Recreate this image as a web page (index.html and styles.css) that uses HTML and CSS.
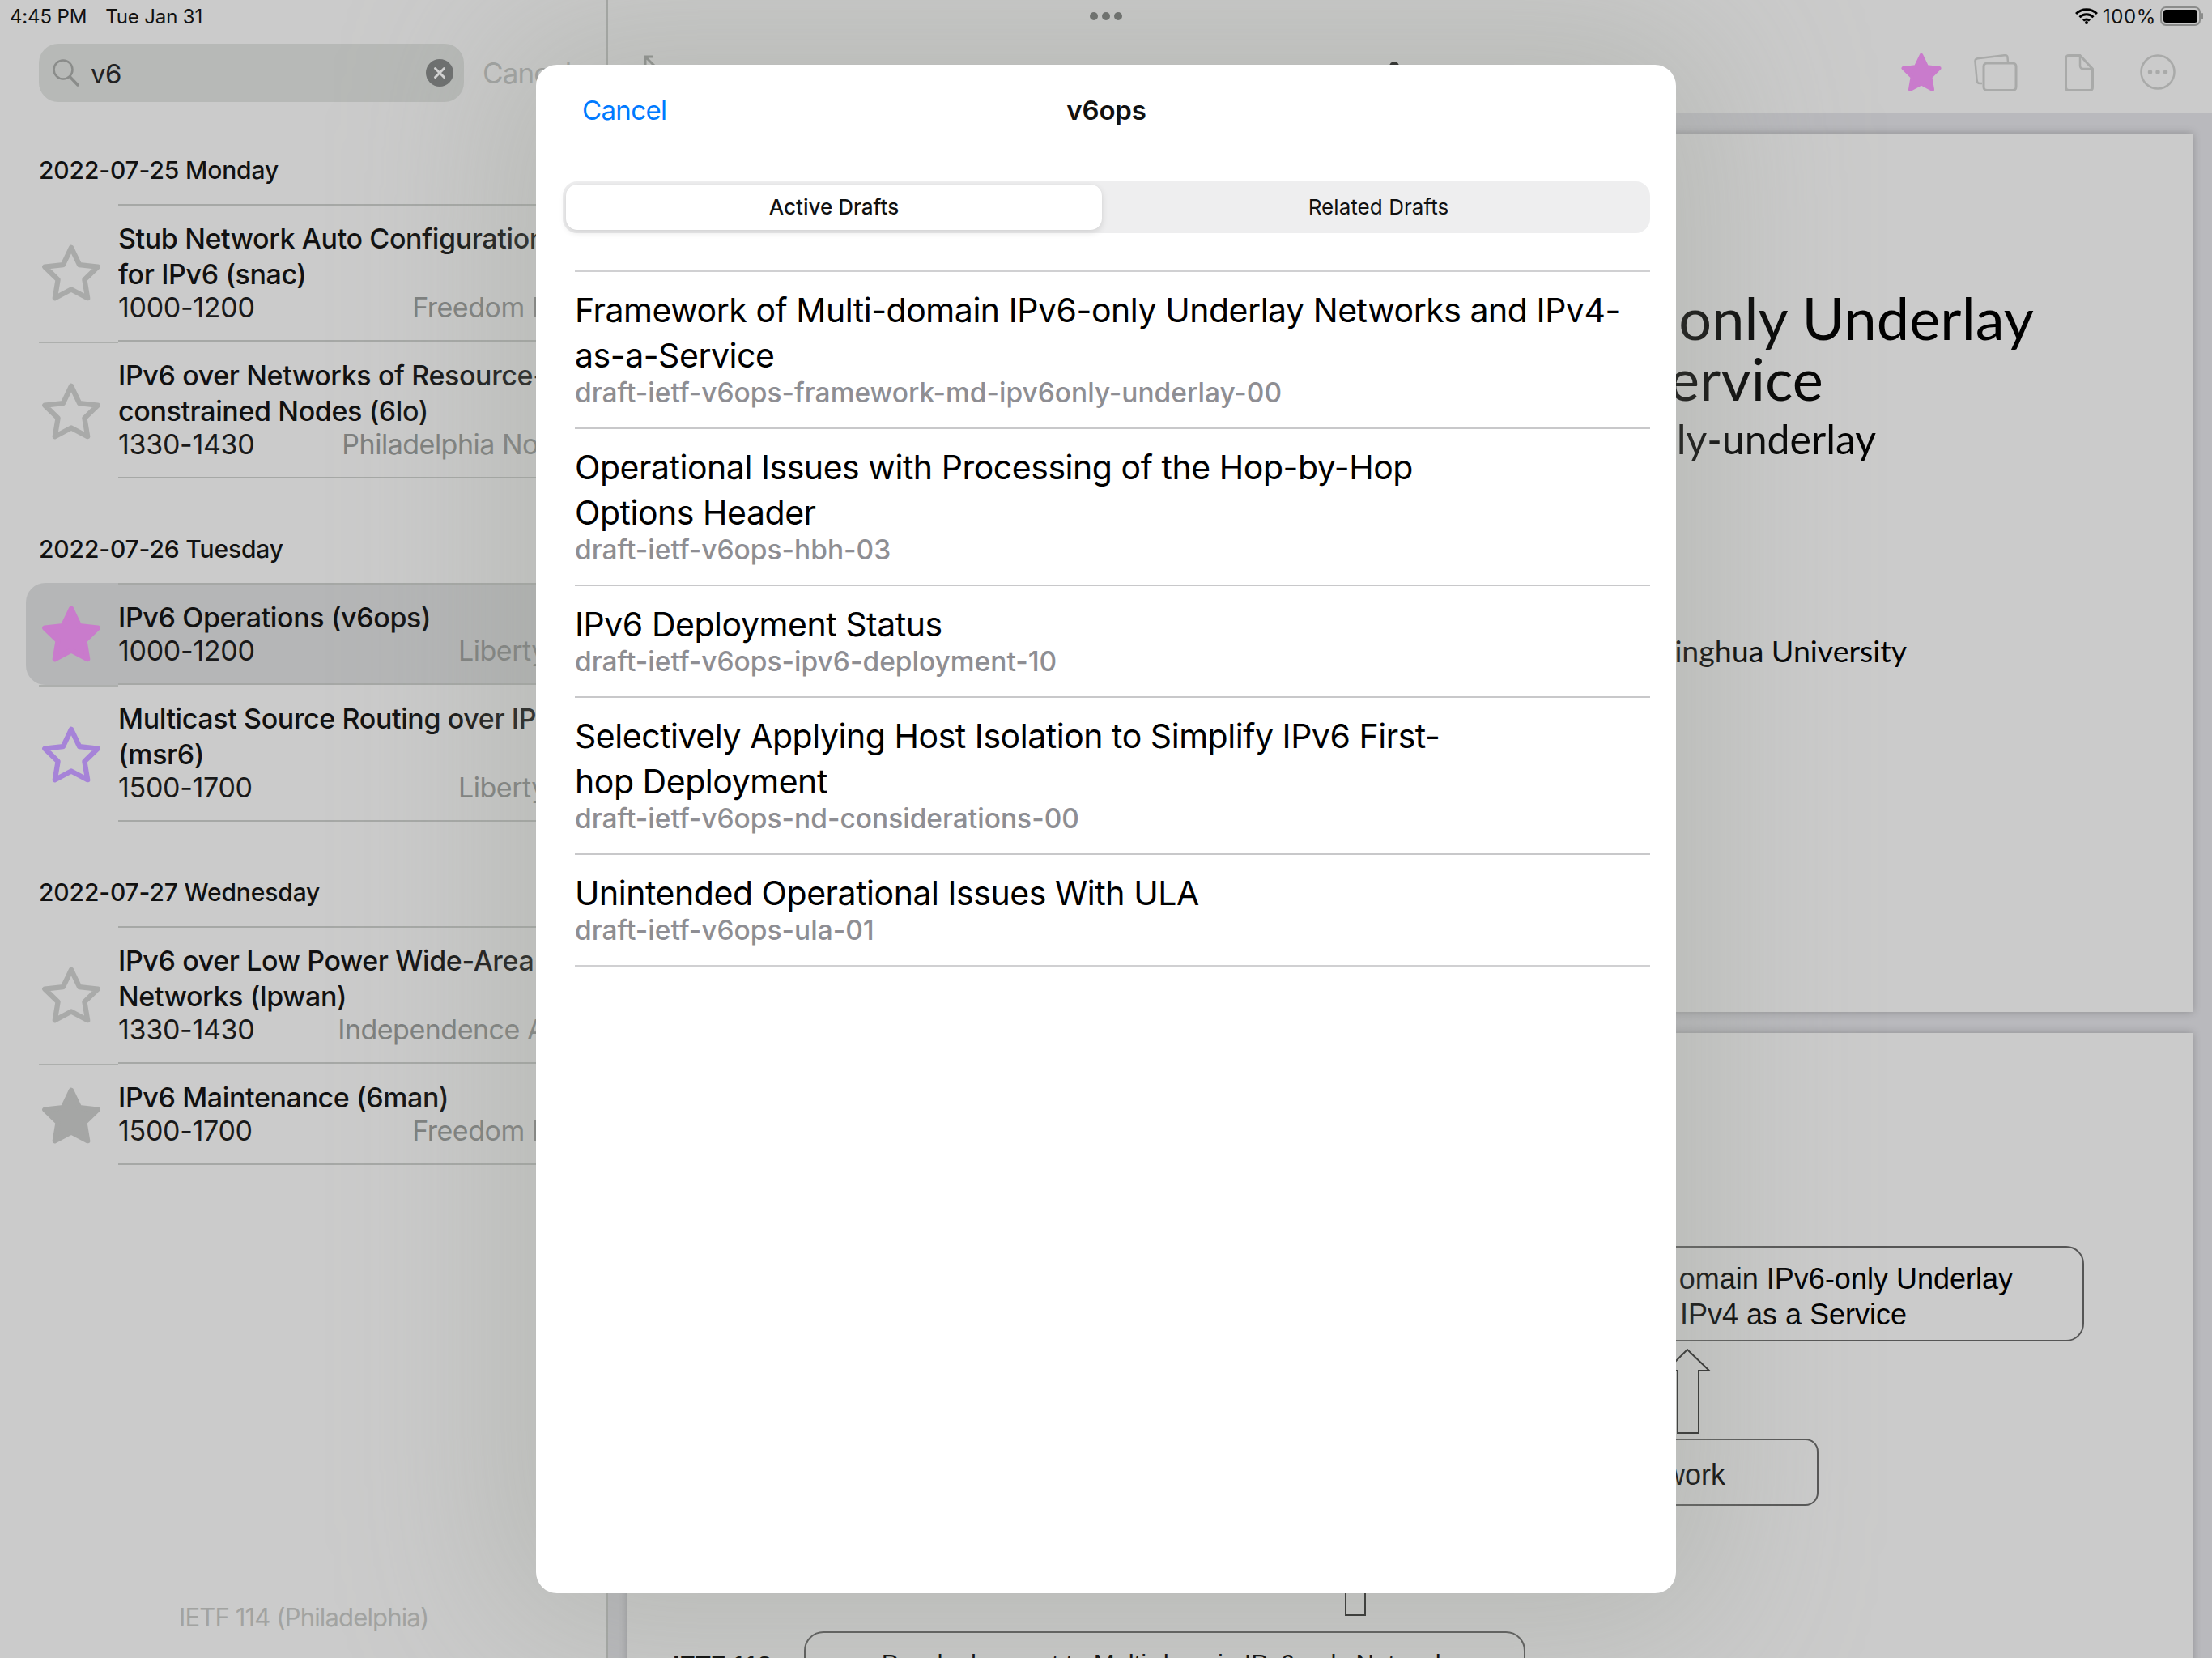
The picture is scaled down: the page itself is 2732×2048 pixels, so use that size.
FILE: index.html
```html
<!DOCTYPE html>
<html lang="en">
<head>
<meta charset="utf-8">
<title>IETF 114</title>
<link rel="stylesheet" href="styles.css">
</head>
<body>
<svg class="defs" width="0" height="0" aria-hidden="true">
  <symbol id="star" viewBox="0 0 68 66">
    <path d="M34 5 42.8 23.5 62.5 25.7 48.3 39.6 51.6 59.3 34 50 16.4 59.3 19.7 39.6 5.5 25.7 25.2 23.5Z"/>
  </symbol>
</svg>
<div class="app">
  <div class="status">
    <div class="status-left"><span class="clock">4:45 PM</span><span>Tue Jan 31</span></div>
    <div class="status-dots"><i></i><i></i><i></i></div>
    <div class="status-right">
      <svg class="wifi" viewBox="0 0 28 20"><path d="M1 7C8.2 0 19.8 0 27 7" fill="none" stroke="#000" stroke-width="3"/><path d="M5.5 11.3C10.200 6.700 17.800 6.700 22.500 11.300" fill="none" stroke="#000" stroke-width="3"/><path d="M10 15.500C12.200 13.400 15.800 13.400 18 15.500" fill="none" stroke="#000" stroke-width="3"/><circle cx="14" cy="18" r="2"/></svg>
      <span class="batt-level">100%</span>
      <svg class="battery" viewBox="0 0 54 24"><rect x="1" y="1" width="48" height="22" rx="6" fill="none" stroke="#8b8c8b" stroke-width="2"/><rect x="4" y="4" width="42" height="16" rx="3.500"/><rect x="51" y="8" width="2" height="8" rx="1" fill="#8b8c8b"/></svg>
    </div>
  </div>

  <aside class="sidebar">
    <div class="search-row">
      <div class="search">
        <svg class="glass" viewBox="0 0 34 36"><circle cx="14" cy="14" r="11.500" fill="none" stroke="#8a8c8a" stroke-width="2.500"/><path d="M22.500 23 32 33" stroke="#8a8c8a" stroke-width="3.500" stroke-linecap="round"/></svg>
        <span class="query">v6</span>
        <svg class="clear" viewBox="0 0 34 34"><circle cx="17" cy="17" r="17" fill="#6c6e6e"/><path d="M11.500 11.500 22.500 22.500M22.500 11.500 11.500 22.500" stroke="#d5d5d5" stroke-width="3" stroke-linecap="round"/></svg>
      </div>
      <span class="search-cancel">Cancel</span>
    </div>

    <section class="day">
      <h2 class="day-title">2022-07-25 Monday</h2>
      <div class="row">
        <div class="star-col"><svg class="star s-gray-o"><use href="#star"/></svg></div>
        <div class="row-body">
          <div class="row-title">Stub Network Auto Configuration<br>for IPv6 (snac)</div>
          <div class="row-meta"><span>1000-1200</span><span class="room">Freedom E/F</span></div>
        </div>
      </div>
      <div class="row">
        <div class="star-col"><svg class="star s-gray-o"><use href="#star"/></svg></div>
        <div class="row-body">
          <div class="row-title">IPv6 over Networks of Resource-<br>constrained Nodes (6lo)</div>
          <div class="row-meta"><span>1330-1430</span><span class="room">Philadelphia North</span></div>
        </div>
      </div>
    </section>

    <section class="day">
      <h2 class="day-title">2022-07-26 Tuesday</h2>
      <div class="row selected">
        <div class="star-col"><svg class="star s-pink"><use href="#star"/></svg></div>
        <div class="row-body">
          <div class="row-title">IPv6 Operations (v6ops)</div>
          <div class="row-meta"><span>1000-1200</span><span class="room">Liberty D</span></div>
        </div>
      </div>
      <div class="row">
        <div class="star-col"><svg class="star s-purple-o"><use href="#star"/></svg></div>
        <div class="row-body">
          <div class="row-title">Multicast Source Routing over IPv6<br>(msr6)</div>
          <div class="row-meta"><span>1500-1700</span><span class="room">Liberty D</span></div>
        </div>
      </div>
    </section>

    <section class="day">
      <h2 class="day-title">2022-07-27 Wednesday</h2>
      <div class="row">
        <div class="star-col"><svg class="star s-gray-o"><use href="#star"/></svg></div>
        <div class="row-body">
          <div class="row-title">IPv6 over Low Power Wide-Area<br>Networks (lpwan)</div>
          <div class="row-meta"><span>1330-1430</span><span class="room">Independence A/B</span></div>
        </div>
      </div>
      <div class="row">
        <div class="star-col"><svg class="star s-gray"><use href="#star"/></svg></div>
        <div class="row-body">
          <div class="row-title">IPv6 Maintenance (6man)</div>
          <div class="row-meta"><span>1500-1700</span><span class="room">Freedom E/F</span></div>
        </div>
      </div>
    </section>

    <div class="side-foot">IETF 114 (Philadelphia)</div>
  </aside>

  <main class="detail">
    <header class="toolbar">
      <svg class="expand" viewBox="0 0 18 18"><path d="M2 12V2H12M2 2 16 16" fill="none" stroke="#8b8d8b" stroke-width="3"/></svg>
      <i class="title-blip"></i>
      <svg class="tool tool-star s-pink" viewBox="0 0 68 66"><use href="#star"/></svg>
      <svg class="tool tool-win" viewBox="0 0 54 46"><path d="M10 36H7C5 36 4 35 3.700 33L1.500 9C1.300 7 2.500 5.500 4.500 5.200L38 1.200C40 1 41.300 2 41.500 4L42 10" fill="none" stroke="#a9aaa9" stroke-width="2.500"/><rect x="12" y="11" width="40" height="33.500" rx="4" fill="none" stroke="#a9aaa9" stroke-width="3"/></svg>
      <svg class="tool tool-doc" viewBox="0 0 36 46"><path d="M5 1.500H19L34.500 18V41C34.500 43.500 33 44.500 31 44.500H5C3 44.500 1.500 43.500 1.500 41V5C1.500 3 3 1.500 5 1.500Z" fill="none" stroke="#a9aaa9" stroke-width="3"/><path d="M19 1.500V14C19 16.500 20.500 18 23 18H34.500" fill="none" stroke="#a9aaa9" stroke-width="2.500"/></svg>
      <svg class="tool tool-more" viewBox="0 0 44 44"><circle cx="22" cy="22" r="20.500" fill="none" stroke="#a9aaa9" stroke-width="2.500"/><circle cx="12.500" cy="22" r="2.700" fill="#a9aaa9"/><circle cx="22" cy="22" r="2.700" fill="#a9aaa9"/><circle cx="31.500" cy="22" r="2.700" fill="#a9aaa9"/></svg>
    </header>
    <div class="pages">
      <article class="page page-title">
        <div class="doc-title doc-line-1">only Underlay</div>
        <div class="doc-title doc-line-2">ervice</div>
        <p class="doc-name">ly-underlay</p>
        <p class="doc-authors">inghua University</p>
      </article>
      <article class="page page-diagram">
        <div class="box box-a"><span class="box-a-1">omain IPv6-only Underlay</span><span class="box-a-2">IPv4 as a Service</span></div>
        <svg class="up-arrow" viewBox="0 0 60 106"><path d="M1 27 27 1 54 27H41V104H15V27Z" fill="none" stroke="#222" stroke-width="2"/></svg>
        <div class="box box-b">work</div>
        <div class="stem"></div>
        <div class="box box-c">Pre-deployment to Multi-domain IPv6-only Network</div>
        <div class="ietf-label">IETF 113</div>
      </article>
    </div>
  </main>

  <div class="sheet">
    <header class="sheet-nav">
      <span class="sheet-cancel">Cancel</span>
      <span class="sheet-title">v6ops</span>
    </header>
    <div class="segments">
      <div class="segment seg-active">Active Drafts</div>
      <div class="segment seg-other">Related Drafts</div>
    </div>
    <ul class="drafts">
      <li class="draft">
        <div class="draft-title">Framework of Multi-domain IPv6-only Underlay Networks and IPv4-<br>as-a-Service</div>
        <div class="draft-name">draft-ietf-v6ops-framework-md-ipv6only-underlay-00</div>
      </li>
      <li class="draft">
        <div class="draft-title">Operational Issues with Processing of the Hop-by-Hop<br>Options Header</div>
        <div class="draft-name">draft-ietf-v6ops-hbh-03</div>
      </li>
      <li class="draft">
        <div class="draft-title">IPv6 Deployment Status</div>
        <div class="draft-name">draft-ietf-v6ops-ipv6-deployment-10</div>
      </li>
      <li class="draft">
        <div class="draft-title">Selectively Applying Host Isolation to Simplify IPv6 First-<br>hop Deployment</div>
        <div class="draft-name">draft-ietf-v6ops-nd-considerations-00</div>
      </li>
      <li class="draft">
        <div class="draft-title">Unintended Operational Issues With ULA</div>
        <div class="draft-name">draft-ietf-v6ops-ula-01</div>
      </li>
    </ul>
  </div>
</div>
</body>
</html>
```
FILE: styles.css
```css
* { box-sizing: border-box; }
html, body { margin: 0; padding: 0; }
body { width: 2732px; height: 2048px; overflow: hidden; background: #cbcbcb; font-family: Inter, "Noto Sans", sans-serif; color: #000; }
.defs { position: absolute; }
.app { position: relative; display: flex; width: 2732px; height: 2048px; overflow: hidden; }

/* status bar */
.status { position: absolute; z-index: 3; top: 0; left: 0; right: 0; height: 40px; padding: 0 10px 0 12px; display: flex; align-items: center; justify-content: space-between; font-size: 24px; letter-spacing: -0.15px; color: #111; }
.status-left { display: flex; gap: 23px; flex: 1; }
.status-dots { display: flex; gap: 5px; flex: none; margin-left: -2px; }
.status-dots i { width: 10px; height: 10px; border-radius: 50%; background: #6f726f; }
.status-right { flex: 1; display: flex; justify-content: flex-end; align-items: center; gap: 6px; }
.wifi { width: 28px; height: 20px; margin-right: 0; }
.batt-level { letter-spacing: 0.6px; }
.battery { width: 54px; height: 24px; margin-left: -1px; }

/* sidebar */
.sidebar { position: relative; flex: none; width: 751px; height: 2048px; padding-top: 54px; background: #cbcbcb; border-right: 2px solid #a4a6a4; }
.search-row { display: flex; align-items: center; margin-left: 48px; gap: 23px; white-space: nowrap; }
.search { flex: none; width: 525px; height: 72px; border-radius: 24px; background: #b7b9b7; display: flex; align-items: center; padding: 0 13px 0 16px; }
.glass { width: 34px; height: 36px; flex: none; }
.query { flex: 1; margin-left: 14px; padding-top: 2px; font-size: 33px; letter-spacing: -0.5px; color: #222; }
.clear { width: 34px; height: 34px; flex: none; }
.search-cancel { font-size: 35px; letter-spacing: -0.9px; color: #9fa1a0; }
.day { margin-top: 67px; }
.search-row + .day { margin-top: 64px; }
.day-title { margin: 0 0 22px 48px; height: 40px; line-height: 40px; font-size: 30px; font-weight: 500; letter-spacing: -0.15px; color: #111; }
.row { display: flex; margin-left: 48px; }
.row.selected { margin-left: 32px; padding-left: 16px; background: #b5b6b7; border-radius: 24px 0 0 24px; }
.star-col { flex: none; width: 98px; display: flex; align-items: center; }
.row + .row .star-col { border-top: 2px solid #adafad; }
.star { display: block; width: 78px; height: 76px; margin: 2px 0 0 1px; }
.row-body { flex: 1; min-width: 0; padding: 20px 87px 20px 0; border-bottom: 2px solid #a6a8a6; overflow: hidden; }
.day-title + .row .row-body { border-top: 2px solid #a6a8a6; padding-top: 19px; }
.row-title { font-size: 34px; line-height: 44px; font-weight: 500; letter-spacing: -0.38px; color: #111; white-space: nowrap; overflow: hidden; }
.row-meta { display: flex; justify-content: space-between; height: 40px; margin-top: -1px; line-height: 40px; font-size: 34px; letter-spacing: -0.3px; color: #1a1a1a; white-space: nowrap; }
.room { color: #7d7f7e; margin-right: -46px; letter-spacing: -0.5px; }
.side-foot { position: absolute; left: 221px; top: 1978px; font-size: 31px; line-height: 40px; letter-spacing: -0.85px; color: #a2a3a1; }
.s-gray-o { fill: none; stroke: #a9aaa9; stroke-width: 5.500; stroke-linejoin: round; }
.s-purple-o { fill: none; stroke: #a683d8; stroke-width: 5.500; stroke-linejoin: round; }
.s-pink { fill: #c97bcc; stroke: #c97bcc; stroke-width: 5.500; stroke-linejoin: round; }
.s-gray { fill: #a5a6a5; stroke: #a5a6a5; stroke-width: 5.500; stroke-linejoin: round; }

/* detail */
.detail { flex: 1; min-width: 0; display: flex; flex-direction: column; background: #b9b9bd; }
.toolbar { position: relative; flex: none; height: 140px; background: #cbcbcb; display: flex; align-items: flex-start; padding: 67px 45px 0 0; justify-content: flex-end; }
.expand { position: absolute; left: 44px; top: 68px; width: 18px; height: 18px; }
.title-blip { position: absolute; left: 965px; top: 76px; width: 12px; height: 12px; border-radius: 50%; background: #111; }
.tool { flex: none; display: block; }
.tool-star { width: 54px; height: 52px; margin-right: 38px; margin-top: -3px; }
.tool-win { width: 54px; height: 46px; margin-right: 58px; }
.tool-doc { width: 36px; height: 46px; margin-right: 57px; }
.tool-more { width: 44px; height: 44px; }
.pages { flex: 1; min-height: 0; padding: 25px 24px 0 24px; display: flex; flex-direction: column; gap: 26px; overflow: hidden; }
.page { flex: none; background: #cbcbcb; box-shadow: 0 0 10px rgba(0, 0, 0, .25); }
.page-title { height: 1085px; padding-top: 190px; text-align: right; color: #000; font-family: Lato, sans-serif; }
.doc-title { font-size: 72px; line-height: 75px; font-weight: 400; letter-spacing: 0.1px; }
.doc-line-1 { margin-right: 196px; }
.doc-line-2 { margin-right: 456px; }
.doc-name { margin: 7px 391px 0 0; font-size: 50px; line-height: 60px; }
.doc-authors { margin: 209px 353px 0 0; font-size: 37.500px; line-height: 46px; }
.page-diagram { position: relative; height: 800px; font-family: "Liberation Sans", Arial, sans-serif; font-size: 36px; line-height: 44px; }
.box { position: absolute; border: 2px solid #555; text-align: right; }
.box-a { left: 857px; top: 263px; width: 942px; height: 118px; border-radius: 22px; padding: 17px 0 0; }
.box-a-1 { display: block; margin-right: 86px; }
.box-a-2 { display: block; margin-right: 217px; }
.box-b { left: 904px; top: 501px; width: 567px; height: 83px; border-radius: 16px; padding: 21px 113px 0 0; }
.box-c { left: 218px; top: 739px; width: 891px; height: 100px; border-radius: 24px; padding-top: 17px; font-size: 31px; text-align: center; }
.up-arrow { position: absolute; left: 1282px; top: 390px; width: 60px; height: 106px; }
.stem { position: absolute; left: 886px; top: 600px; width: 26px; height: 120px; border: 2px solid #222; }
.ietf-label { position: absolute; left: 56px; top: 758px; font-weight: 700; font-size: 30px; }

/* modal sheet */
.sheet { position: absolute; z-index: 2; left: 662px; top: 80px; width: 1408px; height: 1888px; border-radius: 26px; background: #fff; padding: 0 32px 0 33px; box-shadow: 0 0 200px 40px rgba(155, 160, 150, .42); }
.sheet-nav { position: relative; height: 114px; display: flex; align-items: center; justify-content: center; padding-bottom: 2px; }
.sheet-cancel { position: absolute; left: 24px; font-size: 33px; color: #007aff; letter-spacing: -0.65px; }
.sheet-title { font-size: 33px; font-weight: 600; letter-spacing: -0.2px; color: #111; }
.segments { display: flex; height: 64px; margin-top: 30px; padding: 4px; background: #eeeeef; border-radius: 18px; font-size: 26px; line-height: 56px; text-align: center; color: #111; }
.segment { flex: 1; }
.seg-other { padding-left: 10px; letter-spacing: 0.05px; }
.seg-active { flex: none; width: 662px; background: #fff; border-radius: 14px; font-weight: 500; box-shadow: 0 3px 8px rgba(0, 0, 0, .12), 0 0 1px rgba(0, 0, 0, .08); }
.drafts { list-style: none; margin: 46px 0 0 15px; padding: 0; border-top: 2px solid #d0d0d2; }
.draft { padding: 19px 0 23px; border-bottom: 2px solid #c8c8ca; }
.draft:last-child { border-bottom-color: #d0d0d2; }
.draft-title { font-size: 41px; line-height: 56px; letter-spacing: -0.46px; color: #000; white-space: nowrap; }
.draft-name { height: 40px; margin-top: -2px; font-size: 33.500px; line-height: 40px; font-weight: 500; letter-spacing: 0; color: #8e8e93; white-space: nowrap; }
```
